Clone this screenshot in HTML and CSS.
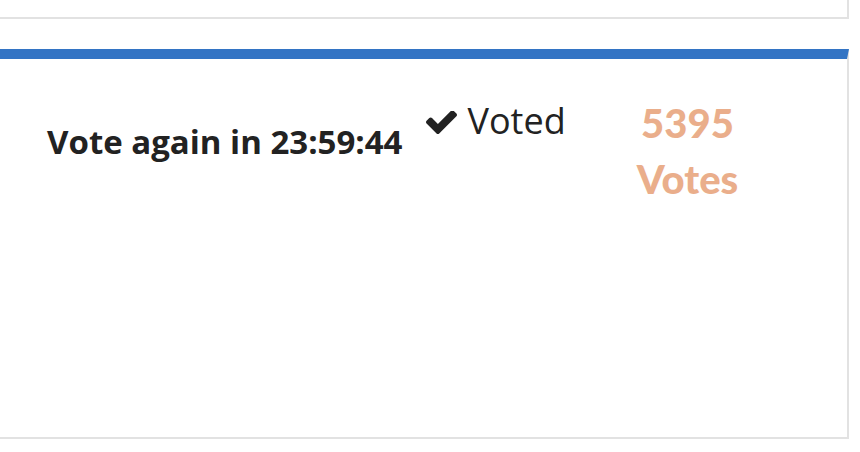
FILE: index.html
```html
<!doctype html>
<html lang="en">
<head>
    <meta charset="UTF-8">
    <meta name="viewport" content="width=device-width, initial-scale=1.0">
    <title>Vote</title>
    <link rel="stylesheet" href="styles.css">
</head>
<body>
<div class="wrap">
    <div class="panel panel-prev"></div>
    <div class="panel panel-vote">
        <div class="countdown">Vote again in 23:59:44</div>
        <div class="status">
            <svg class="check" viewBox="121 370 1550 1152" width="31" height="23">
                <path d="M1671 566q0 40-28 68l-724 724-136 136q-28 28-68 28t-68-28l-136-136-362-362q-28-28-28-68t28-68l136-136q28-28 68-28t68 28l294 295 656-657q28-28 68-28t68 28l136 136q28 28 28 68z" fill="#222"/>
            </svg>
            <span>Voted</span>
        </div>
        <div class="count">
            <div class="num">5395</div>
            <div class="label">Votes</div>
        </div>
    </div>
</div>
</body>
</html>
```

FILE: styles.css
```css
* {
    margin: 0;
    padding: 0;
    box-sizing: border-box;
}

body {
    background: #fff;
    font-family: "Open Sans", Lato, sans-serif;
    color: #222;
}

.wrap {
    width: 849px;
}

.panel {
    background: #fff;
    border-right: 2px solid #e2e2e2;
    border-bottom: 2px solid #e2e2e2;
}

.panel-prev {
    height: 19px;
    margin-bottom: 30px;
}

.panel-vote {
    height: 390px;
    border-top: 10px solid #3374c4;
    display: flex;
    align-items: flex-start;
    padding: 40px 0 0 47px;
}

.countdown {
    font-size: 33px;
    font-weight: 700;
    line-height: 40px;
    margin-top: 23px;
    white-space: nowrap;
}

.status {
    display: flex;
    align-items: center;
    margin-left: 24px;
    font-size: 36px;
    font-weight: 400;
    line-height: 44px;
}

.status .check {
    margin-right: 10px;
    margin-top: 2px;
}

.count {
    margin-left: 71px;
    margin-top: -4px;
    text-align: center;
    color: #eaae8b;
    font-family: Lato, sans-serif;
    font-size: 40px;
    font-weight: 900;
    line-height: 56px;
}
```
